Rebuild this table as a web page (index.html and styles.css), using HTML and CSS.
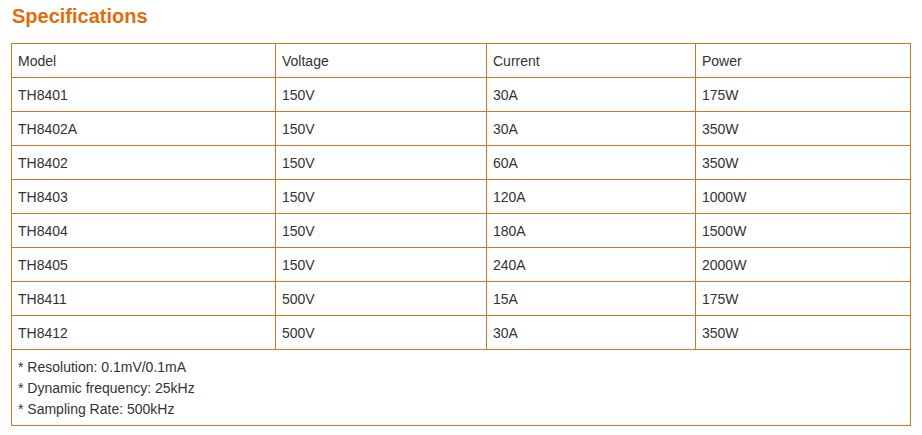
FILE: index.html
```html
<!DOCTYPE html>
<html>
<head>
<meta charset="utf-8">
<link rel="stylesheet" href="styles.css">
</head>
<body>
<div class="page">
  <h2 class="title">Specifications</h2>
  <table class="spec">
    <colgroup>
      <col class="c1"><col class="c2"><col class="c3"><col class="c4">
    </colgroup>
    <tr><td>Model</td><td>Voltage</td><td>Current</td><td>Power</td></tr>
    <tr><td>TH8401</td><td>150V</td><td>30A</td><td>175W</td></tr>
    <tr><td>TH8402A</td><td>150V</td><td>30A</td><td>350W</td></tr>
    <tr><td>TH8402</td><td>150V</td><td>60A</td><td>350W</td></tr>
    <tr><td>TH8403</td><td>150V</td><td>120A</td><td>1000W</td></tr>
    <tr><td>TH8404</td><td>150V</td><td>180A</td><td>1500W</td></tr>
    <tr><td>TH8405</td><td>150V</td><td>240A</td><td>2000W</td></tr>
    <tr><td>TH8411</td><td>500V</td><td>15A</td><td>175W</td></tr>
    <tr><td>TH8412</td><td>500V</td><td>30A</td><td>350W</td></tr>
    <tr><td class="notes" colspan="4">* Resolution: 0.1mV/0.1mA<br>* Dynamic frequency: 25kHz<br>* Sampling Rate: 500kHz</td></tr>
  </table>
</div>
</body>
</html>
```
FILE: styles.css
```css
body {
  margin: 0;
  background: #fff;
  font-family: "Liberation Sans", Arial, sans-serif;
}
.page {
  padding: 5px 11px 0 11px;
}
.title {
  margin: 0 0 15px 1px;
  font-size: 20px;
  line-height: 23px;
  font-weight: bold;
  color: #e36c0a;
}
.spec {
  border-collapse: separate;
  border-spacing: 0;
  border-top: 1px solid #cc7a22;
  border-left: 1px solid #cc7a22;
  width: 900px;
  table-layout: fixed;
}
.c1 { width: 264px; }
.c2 { width: 211px; }
.c3 { width: 209px; }
.c4 { width: 215px; }
.spec td {
  border-right: 1px solid #cc7a22;
  border-bottom: 1px solid #cc7a22;
  height: 34px;
  box-sizing: border-box;
  padding: 0 6px;
  font-size: 14px;
  color: #333;
  vertical-align: middle;
}
.spec td.notes {
  padding: 7px 6px 5px;
  line-height: 21px;
  height: auto;
}
```
